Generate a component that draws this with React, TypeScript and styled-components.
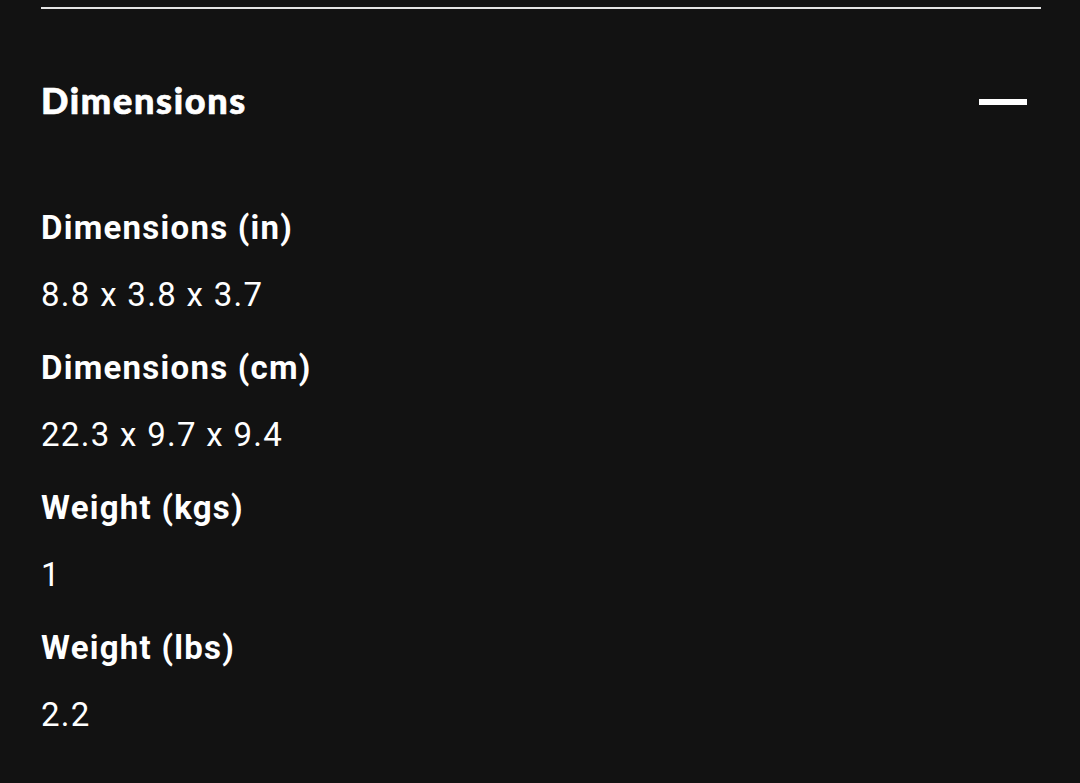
import React from "react";
import styled, { createGlobalStyle } from "styled-components";

const Global = createGlobalStyle`
  html, body { margin: 0; padding: 0; background: #121212; }
  body { font-family: Roboto, "Noto Sans", sans-serif; color: #fff; }
`;

const Page = styled.div`
  width: 1080px;
  height: 783px;
  background: #121212;
  padding: 7px 39px 0 41px;
  box-sizing: border-box;
`;

const Divider = styled.div`
  height: 2px;
  background: #e4e4e4;
`;

const Header = styled.div`
  display: flex;
  align-items: center;
  justify-content: space-between;
  height: 186px;
  padding-right: 14px;
`;

const Title = styled.h2`
  margin: 0 0 4px;
  font-family: Lato, "Noto Sans", sans-serif;
  font-weight: 900;
  font-size: 36px;
  letter-spacing: 1.7px;
  -webkit-text-stroke: 0.7px #fff;
  color: #fff;
`;

const Minus = styled.span`
  display: block;
  width: 48px;
  height: 6px;
  background: #fff;
`;

const List = styled.dl`
  margin: 13px 0 0;
`;

const Label = styled.dt`
  font-size: 33px;
  font-weight: 700;
  line-height: 40px;
  letter-spacing: 1.25px;
  margin: 0 0 27px;
`;

const Value = styled.dd`
  font-size: 33px;
  font-weight: 400;
  line-height: 40px;
  letter-spacing: 1.3px;
  margin: 0 0 33px;
`;

const specs = [
  ["Dimensions (in)", "8.8 x 3.8 x 3.7"],
  ["Dimensions (cm)", "22.3 x 9.7 x 9.4"],
  ["Weight (kgs)", "1"],
  ["Weight (lbs)", "2.2"],
];

export default function App() {
  return (
    <Page>
      <Global />
      <Divider />
      <Header>
        <Title>Dimensions</Title>
        <Minus />
      </Header>
      <List>
        {specs.map(([k, v]) => (
          <React.Fragment key={k}>
            <Label>{k}</Label>
            <Value>{v}</Value>
          </React.Fragment>
        ))}
      </List>
    </Page>
  );
}
